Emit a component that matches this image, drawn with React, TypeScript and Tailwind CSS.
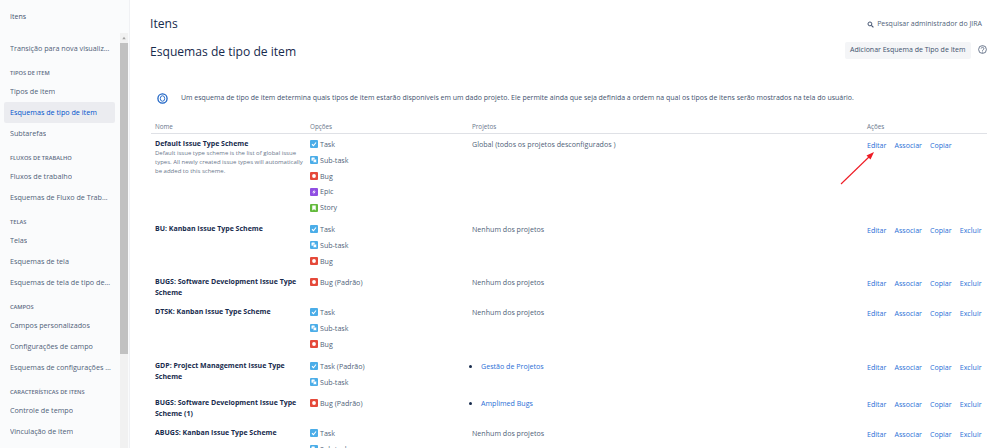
import type { ReactNode } from "react";

type IssueType = "Task" | "Sub-task" | "Bug" | "Epic" | "Story";

interface Option {
  type: IssueType;
  isDefault?: boolean;
}

interface Scheme {
  name: string;
  description?: string;
  options: Option[];
  projects: string | string[];
  canDelete: boolean;
  rowClass: string;
}

const navSections: { title?: string; items: string[] }[] = [
  { items: ["Transição para nova visualização"] },
  { title: "Tipos de item", items: ["Tipos de item", "Esquemas de tipo de item", "Subtarefas"] },
  { title: "Fluxos de trabalho", items: ["Fluxos de trabalho", "Esquemas de Fluxo de Trabalho"] },
  { title: "Telas", items: ["Telas", "Esquemas de tela", "Esquemas de tela de tipo de item"] },
  {
    title: "Campos",
    items: ["Campos personalizados", "Configurações de campo", "Esquemas de configurações de campo"],
  },
  { title: "Características de itens", items: ["Controle de tempo", "Vinculação de item"] },
];

const schemes: Scheme[] = [
  {
    name: "Default Issue Type Scheme",
    description:
      "Default issue type scheme is the list of global issue types. All newly created issue types will automatically be added to this scheme.",
    options: [{ type: "Task" }, { type: "Sub-task" }, { type: "Bug" }, { type: "Epic" }, { type: "Story" }],
    projects: "Global (todos os projetos desconfigurados )",
    canDelete: false,
    rowClass: "h-[85px]",
  },
  {
    name: "BU: Kanban Issue Type Scheme",
    options: [{ type: "Task" }, { type: "Sub-task" }, { type: "Bug" }],
    projects: "Nenhum dos projetos",
    canDelete: true,
    rowClass: "h-[53px]",
  },
  {
    name: "BUGS: Software Development Issue Type Scheme",
    options: [{ type: "Bug", isDefault: true }],
    projects: "Nenhum dos projetos",
    canDelete: true,
    rowClass: "h-[30px]",
  },
  {
    name: "DTSK: Kanban Issue Type Scheme",
    options: [{ type: "Task" }, { type: "Sub-task" }, { type: "Bug" }],
    projects: "Nenhum dos projetos",
    canDelete: true,
    rowClass: "h-[54px]",
  },
  {
    name: "GDP: Project Management Issue Type Scheme",
    options: [{ type: "Task", isDefault: true }, { type: "Sub-task" }],
    projects: ["Gestão de Projetos"],
    canDelete: true,
    rowClass: "h-[37px]",
  },
  {
    name: "BUGS: Software Development Issue Type Scheme (1)",
    options: [{ type: "Bug", isDefault: true }],
    projects: ["Amplimed Bugs"],
    canDelete: true,
    rowClass: "h-[30px]",
  },
  {
    name: "ABUGS: Kanban Issue Type Scheme",
    options: [{ type: "Task" }, { type: "Sub-task" }, { type: "Bug" }],
    projects: "Nenhum dos projetos",
    canDelete: true,
    rowClass: "h-[55px]",
  },
];

function IssueIcon({ type }: { type: IssueType }) {
  const fill = {
    Task: "#4bade8",
    "Sub-task": "#4bade8",
    Bug: "#e5493a",
    Epic: "#904ee2",
    Story: "#63ba3c",
  }[type];
  return (
    <svg viewBox="0 0 16 16" className="w-[8px] h-[8px] shrink-0">
      <rect width="16" height="16" rx="2" fill={fill} />
      {type === "Task" && (
        <path d="M4 8.5 7 11.5 12 5" fill="none" stroke="#fff" strokeWidth="2.2" />
      )}
      {type === "Sub-task" && (
        <>
          <rect x="3" y="3" width="6.5" height="6.5" rx="1" fill="#fff" />
          <rect x="6.5" y="6.5" width="6.5" height="6.5" rx="1" fill="#fff" stroke={fill} />
        </>
      )}
      {type === "Bug" && <circle cx="8" cy="8" r="3.8" fill="#fff" />}
      {type === "Epic" && <path d="M9.5 3 4.5 9H8l-1.5 4 5-6H8z" fill="#fff" />}
      {type === "Story" && <path d="M4.5 3h7v10L8 10.5 4.5 13z" fill="#fff" />}
    </svg>
  );
}

function SideItem({ label, active }: { label: string; active?: boolean }) {
  return (
    <div
      className={`h-[21px] flex items-center pl-[6px] pr-[4px] rounded-[2px] ${
        active ? "bg-[#ebecf0] text-[#0052cc]" : "text-[#505f79]"
      }`}
    >
      <span className="truncate">{label}</span>
    </div>
  );
}

function Sidebar() {
  return (
    <aside className="w-[130px] shrink-0 h-full bg-[#fafbfc] flex flex-col border-r border-[#f0f1f4]">
      <div className="h-[33px] pl-[10px] pt-[11px] text-[7px] leading-[12px] text-[#42526e]">Itens</div>
      <div className="flex flex-1 min-h-0">
        <nav className="w-[111px] ml-[4px] pt-[5px] text-[7.2px] overflow-hidden">
          {navSections.map((section, i) => (
            <div key={i}>
              {section.title && (
                <div className="h-[15px] mt-[7px] pl-[6px] flex items-center text-[5.7px] font-semibold uppercase text-[#5e6c84]">
                  {section.title}
                </div>
              )}
              {section.items.map((item) => (
                <SideItem key={item} label={item} active={item === "Esquemas de tipo de item"} />
              ))}
            </div>
          ))}
        </nav>
        <div className="w-[8px] ml-[5px] bg-[#f1f1f1] flex flex-col">
          <div className="h-[10px] flex items-center justify-center">
            <svg viewBox="0 0 8 8" className="w-[4px] h-[4px]">
              <path d="M4 1.5 7.5 6.5H.5z" fill="#a3a3a3" />
            </svg>
          </div>
          <div className="h-[311px] bg-[#c1c1c1]" />
        </div>
      </div>
    </aside>
  );
}

function InfoIcon() {
  return (
    <svg viewBox="0 0 12 12" className="w-[11px] h-[11px] shrink-0">
      <circle cx="6" cy="6" r="5" fill="none" stroke="#1b62c4" strokeWidth="1.4" />
      <ellipse cx="6" cy="6" rx="2.4" ry="3" fill="none" stroke="#1b62c4" strokeWidth="1" />
    </svg>
  );
}

function HeadCell({ children }: { children: ReactNode }) {
  return <div className="text-[6.3px] text-[#6b778c]">{children}</div>;
}

function SchemeRow({ scheme }: { scheme: Scheme }) {
  return (
    <div className={`grid grid-cols-[155px_162px_395px_1fr] pl-[4px] pt-[5px] overflow-hidden ${scheme.rowClass}`}>
      <div className="pr-[6px]">
        <div className="text-[7px] leading-[10.7px] font-bold text-[#172b4d]">{scheme.name}</div>
        {scheme.description && (
          <div className="text-[6px] leading-[9px] -mt-[0.5px] text-[#6b778c] w-[148px]">{scheme.description}</div>
        )}
      </div>
      <div className="-mt-[2.5px]">
        {scheme.options.map((option) => (
          <div key={option.type} className="h-[15.8px] flex items-center gap-[2px] text-[7.1px] text-[#505f79]">
            <IssueIcon type={option.type} />
            <span>
              {option.type}
              {option.isDefault && " (Padrão)"}
            </span>
          </div>
        ))}
      </div>
      <div className="text-[7.1px] leading-[10.7px] text-[#505f79]">
        {typeof scheme.projects === "string" ? (
          scheme.projects
        ) : (
          <ul className="list-disc pl-[9px]">
            {scheme.projects.map((project) => (
              <li key={project} className="text-[#172b4d]">
                <a className="text-[#2b6fd6]">{project}</a>
              </li>
            ))}
          </ul>
        )}
      </div>
      <div className="flex gap-[8px] text-[7.1px] leading-[13.5px] text-[#2b6fd6]">
        <a>Editar</a>
        <a>Associar</a>
        <a>Copiar</a>
        {scheme.canDelete && <a>Excluir</a>}
      </div>
    </div>
  );
}

export default function App() {
  return (
    <div
      className="relative h-[448px] w-[999px] overflow-hidden bg-white flex"
      style={{ fontFamily: '"Open Sans", "Noto Sans", sans-serif' }}
    >
      <Sidebar />
      <main className="flex-1 min-w-0 pl-[20px] pr-[12px]">
        <div className="h-[40px] flex items-start justify-between pt-[15px]">
          <h1 className="text-[12.1px] leading-[18px] font-normal text-[#172b4d]">Itens</h1>
          <div className="flex items-center gap-[3px] pt-[3px] pr-[5px] text-[7px] leading-[12px] text-[#505f79]">
            <svg viewBox="0 0 12 12" className="w-[7px] h-[7px]">
              <circle cx="5" cy="5" r="3.3" fill="none" stroke="#42526e" strokeWidth="1.7" />
              <path d="M7.5 7.5 11 11" stroke="#42526e" strokeWidth="2" />
            </svg>
            Pesquisar administrador do JIRA
          </div>
        </div>
        <div className="h-[48px] flex items-start justify-between">
          <h2 className="text-[12.1px] leading-[22px] pt-[1px] font-normal text-[#172b4d]">
            Esquemas de tipo de item
          </h2>
          <div className="flex items-start gap-[7px]">
            <button className="h-[17px] mt-[2px] px-[5.5px] rounded-[2px] bg-[#f4f5f7] text-[7px] text-[#42526e]">
              Adicionar Esquema de Tipo de Item
            </button>
            <svg viewBox="0 0 12 12" className="w-[9px] h-[9px] mt-[5px]">
              <circle cx="6" cy="6" r="5.2" fill="none" stroke="#42526e" strokeWidth="1" />
              <path d="M4.2 4.8a1.8 1.8 0 1 1 2.8 1.5c-.7.4-1 .8-1 1.5" fill="none" stroke="#42526e" strokeWidth="1" />
              <circle cx="6" cy="9.3" r=".7" fill="#42526e" />
            </svg>
          </div>
        </div>
        <div className="flex items-center h-[20px] mt-[0.5px] pl-[7px] gap-[13px] text-[6.97px] text-[#42526e]">
          <InfoIcon />
          <span>
            Um esquema de tipo de item determina quais tipos de item estarão disponíveis em um dado projeto. Ele
            permite ainda que seja definida a ordem na qual os tipos de itens serão mostrados na tela do usuário.
          </span>
        </div>
        <div className="w-[836px] ml-[1px] mt-[12.5px]">
          <div className="grid grid-cols-[155px_162px_395px_1fr] pl-[4px] h-[13px] items-center border-b-[1.5px] border-[#dfe1e6]">
            <HeadCell>Nome</HeadCell>
            <HeadCell>Opções</HeadCell>
            <HeadCell>Projetos</HeadCell>
            <HeadCell>Ações</HeadCell>
          </div>
          {schemes.map((scheme) => (
            <SchemeRow key={scheme.name} scheme={scheme} />
          ))}
        </div>
      </main>
      <svg viewBox="0 0 40 40" className="absolute left-[838px] top-[149px] w-[40px] h-[40px]">
        <path d="M3 35 33 6" stroke="#ee1c25" strokeWidth="1.1" />
        <path d="M36 3 28.5 6.5 32.5 10.5z" fill="#ee1c25" />
      </svg>
    </div>
  );
}
